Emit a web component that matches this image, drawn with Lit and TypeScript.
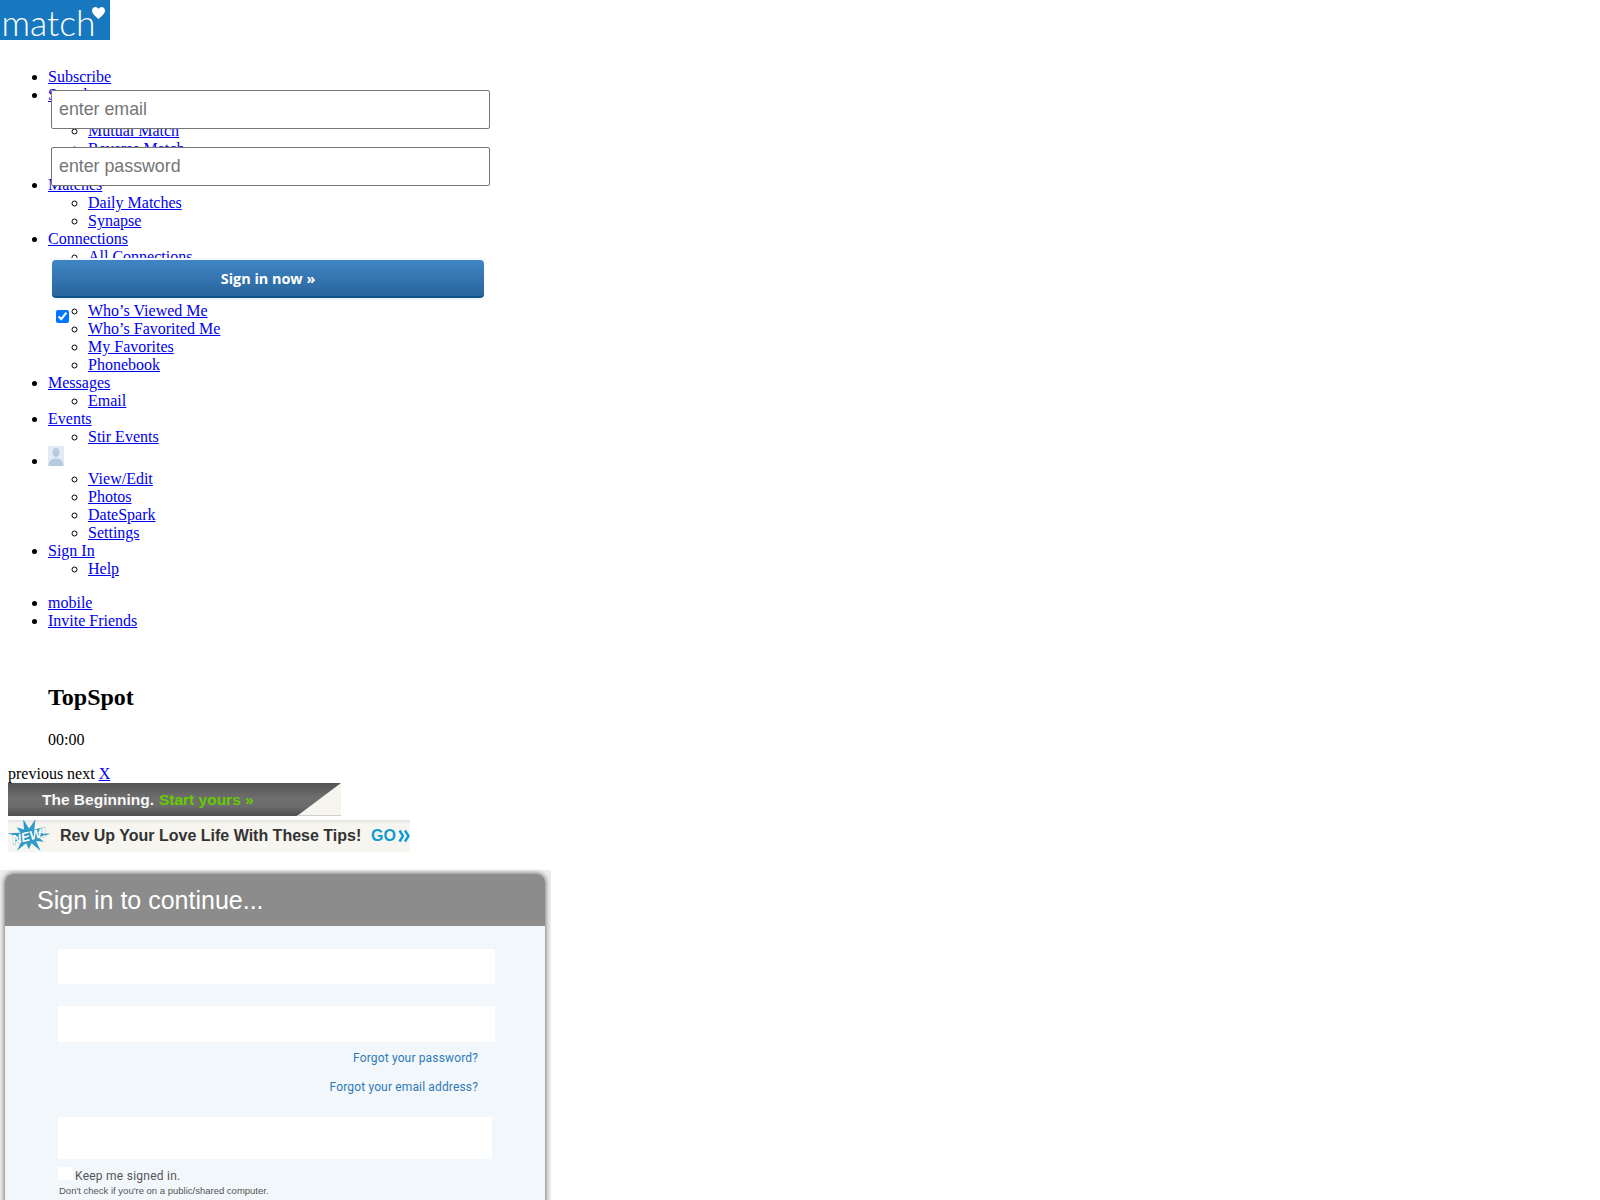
import { LitElement, html, css, svg } from "lit";
import { customElement } from "lit/decorators.js";

type Item = { label: string; avatar?: boolean; children?: string[] };

const NAV: Item[] = [
  { label: "Subscribe" },
  { label: "Search", children: ["Basic Search", "Mutual Match", "Reverse Match", "Username"] },
  { label: "Matches", children: ["Daily Matches", "Synapse"] },
  {
    label: "Connections",
    children: ["All Connections", "Received", "Sent", "Who’s Viewed Me", "Who’s Favorited Me", "My Favorites", "Phonebook"],
  },
  { label: "Messages", children: ["Email"] },
  { label: "Events", children: ["Stir Events"] },
  { label: "", avatar: true, children: ["View/Edit", "Photos", "DateSpark", "Settings"] },
  { label: "Sign In", children: ["Help"] },
];

const starPoints = Array.from({ length: 22 }, (_, i) => {
  const a = (i * Math.PI) / 11 - Math.PI / 2 + 0.3;
  const r = i % 2 ? 9.5 : i % 4 === 0 ? 22 : 16.5;
  return `${(21 + r * Math.cos(a)).toFixed(1)},${(16 + r * 0.8 * Math.sin(a)).toFixed(1)}`;
}).join(" ");

@customElement("app-root")
export class AppRoot extends LitElement {
  static styles = css`
    :host {
      display: block;
      position: relative;
      height: 1200px;
      overflow: hidden;
      font-family: "Liberation Serif", serif;
      font-size: 16px;
      color: #000;
      background: #fff;
    }
    a { color: #0000ee; text-decoration: underline; }
    .logo {
      width: 110px;
      height: 40px;
      background: #1878bf;
      display: block;
      overflow: visible;
    }
    ul { margin: 0; padding-left: 40px; }
    ul.main, ul.extra { padding-left: 48px; }
    .main { margin-top: 28px; }
    .sub { list-style: circle; }
    .extra { margin-top: 16px; }
    .avatar { display: inline-block; }
    .body { padding-left: 48px; }
    h2 { font-size: 24px; margin: 54px 0 20px; line-height: 27px; }
    .time { margin: 0 0 16px; line-height: 18px; }
    .pager { padding-left: 8px; line-height: 18px; }
    .banner-a {
      margin-left: 8px;
      width: 333px;
      height: 33px;
      background: linear-gradient(#545454, #6e6e6e 45%, #6c6c6c 70%, #4f4f4f);
      position: relative;
      display: flex;
      align-items: center;
      padding-left: 34px;
      box-sizing: border-box;
      font: bold 15.5px "Liberation Sans", sans-serif;
      color: #f8f8f8;
      gap: 5px;
      white-space: nowrap;
    }
    .corner { position: absolute; right: 0; top: 0; }
    .green { color: #66cc00; }
    .banner-b {
      margin: 4px 0 0 8px;
      width: 402px;
      height: 32px;
      background: linear-gradient(#e2e2e0, #f7f5ef 4px);
      display: flex;
      align-items: center;
      font: bold 16px "Liberation Sans", sans-serif;
      color: #333;
      white-space: nowrap;
    }
    .star { flex: none; margin-right: 10px; }
    .go { color: #109bd1; margin-left: auto; }
    .chev { margin: 0 0 0 2px; flex: none; }
    .dialog {
      margin-top: 18px;
      width: 551px;
      height: 330px;
      background: #ececec;
      padding: 4px 6px 0 5px;
      box-sizing: border-box;
      font-family: "Liberation Sans", sans-serif;
    }
    .card {
      height: 400px;
      border-radius: 8px 8px 0 0;
      background: #f2f7fb;
      box-shadow: 0 0 4px 1px #7d7d7d;
    }
    .head {
      height: 52px;
      background: #8c8c8c;
      border-radius: 8px 8px 0 0;
      color: #fff;
      font-size: 25px;
      line-height: 52px;
      padding-left: 32px;
    }
    .fields { padding: 23px 0 0 53px; display: flex; flex-direction: column; }
    .field { background: #fff; width: 437px; height: 35px; }
    .field.two { margin-top: 22px; height: 36px; }
    .link {
      width: 420px;
      text-align: right;
      font: 12px/14px Roboto, sans-serif;
      color: #2f7ab8;
      text-decoration: none;
      letter-spacing: 0.15px;
      display: block;
    }
    .link.first { margin-top: 9px; }
    .link.second { margin-top: 15px; }
    .submit { background: #fff; width: 434px; height: 42px; margin-top: 23px; }
    .keep {
      margin-top: 8px;
      display: flex;
      align-items: flex-start;
      gap: 2px;
      font: 12px/14px Roboto, sans-serif;
      color: #555;
      letter-spacing: 0.25px;
    }
    .keep span.box { width: 15px; height: 13px; background: #fff; display: block; }
    .keep span.lbl { margin-top: 2px; }
    .hint { font-size: 9.5px; line-height: 12px; color: #555; margin: 2px 0 0 1px; }
    .overlay {
      position: absolute;
      left: 51px;
      top: 90px;
      width: 439px;
      display: flex;
      flex-direction: column;
    }
    .overlay input.text {
      height: 39px;
      width: 439px;
      box-sizing: border-box;
      border: 1px solid #767676;
      border-radius: 2px;
      padding: 0 7px;
      font: 17.8px "Liberation Sans", sans-serif;
      background: #fff;
      margin: 0;
    }
    .overlay input.text + input.text { margin-top: 18px; }
    .overlay input.text::placeholder { color: #757575; opacity: 1; }
    .btn-wrap {
      margin-top: 72px;
      width: 434px;
      padding: 2px 1px;
      box-sizing: border-box;
      background: #f4f8fc;
    }
    .btn {
      display: block;
      width: 100%;
      height: 38px;
      border: 0;
      border-bottom: 2px solid #0e5488;
      border-radius: 4px;
      background: linear-gradient(#3f85c5, #2a659c);
      color: #fff;
      font: bold 14.4px "Open Sans", sans-serif;
      padding: 0;
    }
    .overlay input.check { margin: 10px 0 0 5px; width: 13px; height: 13px; align-self: flex-start; }
  `;

  private logo() {
    return html`<svg class="logo" viewBox="0 0 110 40" role="img" aria-label="match">
      <rect width="110" height="40" fill="#1878bf"></rect>
      <text x="1.5" y="36" font-family="Lato, sans-serif" font-weight="300" font-size="36" fill="#fff" textLength="94" lengthAdjust="spacingAndGlyphs">match</text>
      <path d="M98.5 19 C95 16 92 13.5 92 10.5 C92 8 94 7 95.5 7 C97 7 98 8 98.5 9 C99 8 100 7 101.5 7 C103 7 105 8 105 10.5 C105 13.5 102 16 98.5 19 Z" fill="#fff"></path>
    </svg>`;
  }

  private avatar() {
    return html`<svg class="avatar" width="16" height="20" viewBox="0 0 16 20">
      <rect width="16" height="20" fill="#e2eaf3"></rect>
      <ellipse cx="8" cy="6.5" rx="3.4" ry="4.4" fill="#b6c9de"></ellipse>
      <path d="M0.5 20 C0.5 15 3 14 6 12.5 L10 12.5 C13 14 15.5 15 15.5 20 Z" fill="#b6c9de"></path>
    </svg>`;
  }

  render() {
    return html`
      ${this.logo()}
      <ul class="main">
        ${NAV.map(
          (n) => html`<li>
            ${n.avatar ? html`<a href="#">${this.avatar()}</a>` : html`<a href="#">${n.label}</a>`}
            ${n.children
              ? html`<ul class="sub">${n.children.map((c) => html`<li><a href="#">${c}</a></li>`)}</ul>`
              : ""}
          </li>`
        )}
      </ul>
      <ul class="extra">
        <li><a href="#">mobile</a></li>
        <li><a href="#">Invite Friends</a></li>
      </ul>
      <div class="body">
        <h2>TopSpot</h2>
        <p class="time">00:00</p>
      </div>
      <div class="pager">previous next <a href="#">X</a></div>
      <div class="banner-a">
        <span>The Beginning.</span><span class="green">Start yours »</span>
        <svg class="corner" width="44" height="33" viewBox="0 0 44 33">
          <path d="M44 0 L44 33 L0 33 Z" fill="#f7f5ef"></path>
          <path d="M0 32.5 L44 32.5" stroke="#cfcfcf"></path>
        </svg>
      </div>
      <div class="banner-b">
        <svg class="star" width="42" height="32" viewBox="0 0 42 32">
          <polygon points=${starPoints} fill="#2f9bc9"></polygon>
          ${svg`<text x="21" y="20.5" text-anchor="middle" transform="rotate(-14 21 16)" font-family="Liberation Sans, sans-serif" font-style="italic" font-weight="bold" font-size="13" fill="#fff" stroke="#1d7dab" stroke-width="0.5" paint-order="stroke">NEW!</text>`}
        </svg>
        <span>Rev Up Your Love Life With These Tips!</span>
        <span class="go">GO</span>
        <svg class="chev" width="12" height="14" viewBox="0 0 12 14">
          <path d="M1.5 1.5 L5 7 L1.5 12.5 M7 1.5 L10.5 7 L7 12.5" fill="none" stroke="#109bd1" stroke-width="2.4"></path>
        </svg>
      </div>
      <div class="dialog">
        <div class="card">
          <div class="head">Sign in to continue...</div>
          <div class="fields">
            <div class="field"></div>
            <div class="field two"></div>
            <a class="link first" href="#">Forgot your password?</a>
            <a class="link second" href="#">Forgot your email address?</a>
            <div class="submit"></div>
            <div class="keep"><span class="box"></span><span class="lbl">Keep me signed in.</span></div>
            <div class="hint">Don't check if you're on a public/shared computer.</div>
          </div>
        </div>
      </div>
      <form class="overlay">
        <input class="text" type="text" placeholder="enter email" />
        <input class="text" type="password" placeholder="enter password" />
        <div class="btn-wrap"><button class="btn" type="button">Sign in now »</button></div>
        <input class="check" type="checkbox" checked />
      </form>
    `;
  }
}
